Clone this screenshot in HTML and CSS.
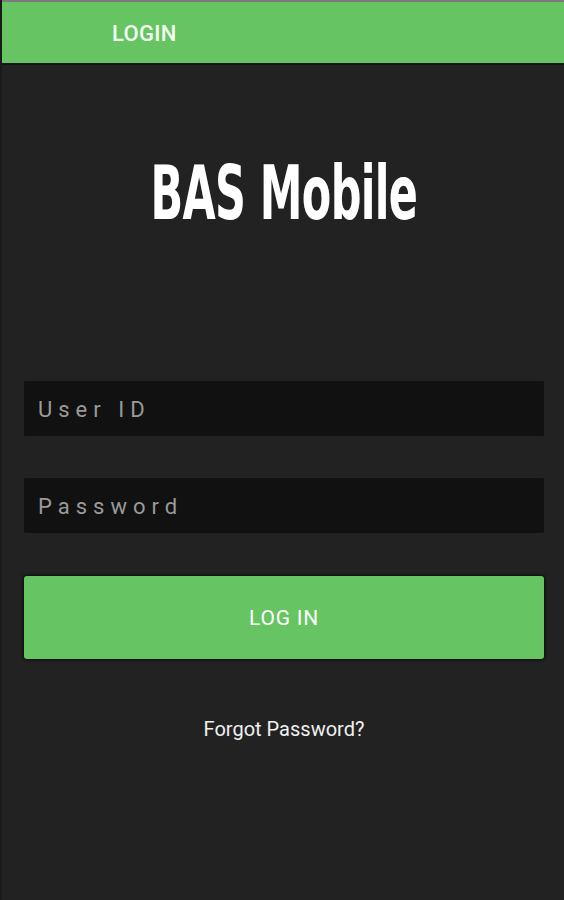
FILE: index.html
```html
<!DOCTYPE html>
<html>
<head>
<meta charset="utf-8">
<link rel="stylesheet" href="styles.css">
</head>
<body>
<div class="screen">
  <header class="appbar"><span class="appbar-title">LOGIN</span></header>
  <main class="content">
    <h1 class="brand"><span class="brand-text">BAS Mobile</span></h1>
    <form class="form">
      <div class="field"><span class="placeholder">User ID</span></div>
      <div class="field"><span class="placeholder">Password</span></div>
      <button type="button" class="btn">LOG IN</button>
    </form>
    <div class="forgot">Forgot Password?</div>
  </main>
</div>
</body>
</html>
```

FILE: styles.css
```css
* { box-sizing: border-box; }
html, body { margin: 0; padding: 0; background: #222222; }
body { font-family: Roboto, "Noto Sans", sans-serif; }
.screen {
  width: 564px;
  height: 900px;
  background: #222222;
  border-left: 2px solid #1a1a1a;
  display: flex;
  flex-direction: column;
}
.appbar {
  height: 65px;
  background: #66c462;
  border-top: 2px solid #7a7a7a;
  border-bottom: 2px solid #161616;
  display: flex;
  align-items: center;
  padding-left: 110px;
}
.appbar-title {
  color: #f4fff3;
  font-size: 22px;
  font-weight: 500;
  letter-spacing: 0.3px;
  margin-top: 1px;
}
.content {
  padding: 0 20px 0 22px;
  display: flex;
  flex-direction: column;
}
.brand {
  margin: 94px 0 0 0;
  height: 70px;
  display: flex;
  justify-content: center;
  align-items: center;
}
.brand-text {
  font-family: "DejaVu Sans Condensed", "DejaVu Sans", sans-serif;
  font-weight: bold;
  font-size: 74px;
  color: #ffffff;
  display: inline-block;
  transform: scaleX(0.645);
  white-space: nowrap;
  letter-spacing: -1px;
  line-height: 1;
  margin-top: -3px;
}
.form {
  margin-top: 152px;
  display: flex;
  flex-direction: column;
  gap: 42px;
}
.field {
  height: 55px;
  background: #111111;
  border-radius: 2px;
  display: flex;
  align-items: center;
  padding-left: 14px;
}
.placeholder {
  color: #9a9a9a;
  font-size: 22px;
  letter-spacing: 6px;
  margin-top: 1px;
}
.btn {
  height: 83px;
  margin-top: 1px;
  background: #66c462;
  border: none;
  border-radius: 3px;
  box-shadow: 0 0 3px 1px #0c0c0c;
  color: #ffffff;
  font-family: Roboto, sans-serif;
  font-size: 21px;
  font-weight: 400;
  letter-spacing: 0.8px;
}
.forgot {
  margin-top: 58px;
  text-align: center;
  color: #f0f0f0;
  font-size: 20px;
}
```
